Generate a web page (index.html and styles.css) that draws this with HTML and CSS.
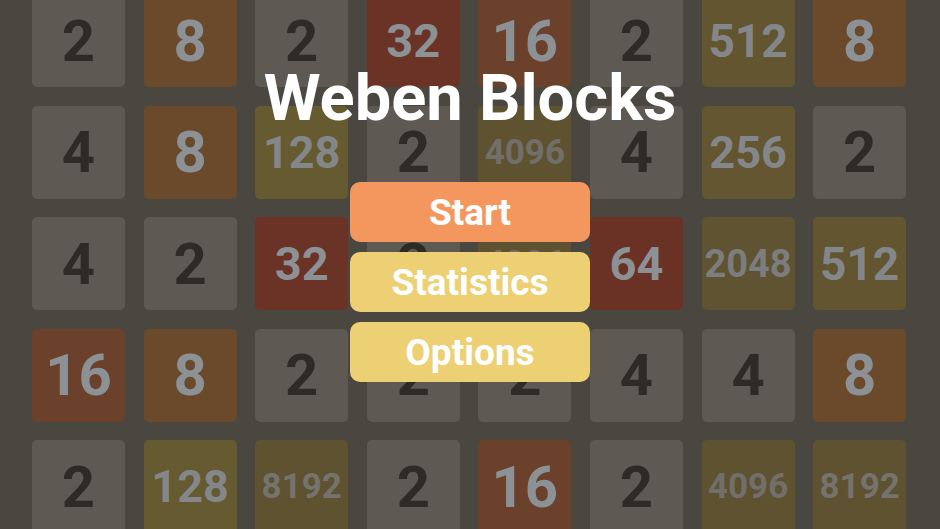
FILE: index.html
```html
<!DOCTYPE html>
<html>
<head>
<meta charset="utf-8">
<link rel="stylesheet" href="styles.css">
</head>
<body>
<div class="board">
  <div class="tile t2">2</div><div class="tile t8">8</div><div class="tile t2">2</div><div class="tile t32">32</div><div class="tile t16">16</div><div class="tile t2">2</div><div class="tile t512">512</div><div class="tile t8">8</div>
  <div class="tile t4">4</div><div class="tile t8">8</div><div class="tile t128">128</div><div class="tile t2">2</div><div class="tile t4096">4096</div><div class="tile t4">4</div><div class="tile t256">256</div><div class="tile t2">2</div>
  <div class="tile t4">4</div><div class="tile t2">2</div><div class="tile t32">32</div><div class="tile t2">2</div><div class="tile t4096">4096</div><div class="tile t64">64</div><div class="tile t2048">2048</div><div class="tile t512">512</div>
  <div class="tile t16">16</div><div class="tile t8">8</div><div class="tile t2">2</div><div class="tile t2">2</div><div class="tile t2">2</div><div class="tile t4">4</div><div class="tile t4">4</div><div class="tile t8">8</div>
  <div class="tile t2">2</div><div class="tile t128">128</div><div class="tile t8192">8192</div><div class="tile t2">2</div><div class="tile t16">16</div><div class="tile t2">2</div><div class="tile t4096">4096</div><div class="tile t8192">8192</div>
</div>
<div class="menu">
  <h1 class="title">Weben Blocks</h1>
  <div class="buttons">
    <div class="btn btn-start">Start</div>
    <div class="btn btn-alt">Statistics</div>
    <div class="btn btn-alt">Options</div>
  </div>
</div>
</body>
</html>
```
FILE: styles.css
```css
html, body {
  margin: 0;
  padding: 0;
}
body {
  width: 940px;
  height: 529px;
  overflow: hidden;
  background: #4a4741;
  font-family: Roboto, "Liberation Sans", sans-serif;
  position: relative;
}
.board {
  display: grid;
  grid-template-columns: repeat(8, 93px);
  grid-auto-rows: 93px;
  column-gap: 18.6px;
  row-gap: 18.6px;
  padding-left: 32px;
  margin-top: -6px;
}
.tile {
  border-radius: 5px;
  display: flex;
  align-items: center;
  justify-content: center;
  font-weight: 700;
  color: #8c9196;
  font-size: 58px;
}
.t2, .t4 {
  background: #5e5952;
  color: #2e2a26;
}
.t8 { background: #6b4a2c; }
.t16 { background: #6b412b; }
.t32 { background: #6a3325; font-size: 47px; }
.t64 { background: #6a3224; font-size: 47px; }
.t128 { background: #655a30; font-size: 45px; color: #84878a; }
.t256 { background: #635630; font-size: 45px; color: #84878a; }
.t512 { background: #625530; font-size: 46px; color: #84878a; }
.t2048 { background: #605331; font-size: 38px; color: #7c7d7e; }
.t4096 { background: #5f5231; font-size: 35px; color: #716f6a; }
.t8192 { background: #5f5231; font-size: 35px; color: #75736e; }

.menu {
  position: absolute;
  left: 0;
  top: 0;
  width: 940px;
  display: flex;
  flex-direction: column;
  align-items: center;
}
.title {
  margin: 66px 0 0 0;
  font-size: 65px;
  line-height: 65px;
  font-weight: 700;
  color: #ffffff;
}
.buttons {
  margin-top: 51px;
  display: flex;
  flex-direction: column;
  gap: 10px;
}
.btn {
  width: 240px;
  height: 60px;
  border-radius: 10px;
  display: flex;
  align-items: center;
  justify-content: center;
  color: #ffffff;
  font-size: 37px;
  font-weight: 700;
}
.btn-start { background: #f4975f; }
.btn-alt { background: #ecd073; }
```
